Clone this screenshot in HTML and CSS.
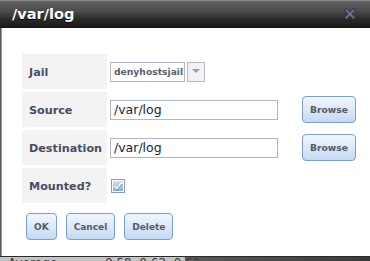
FILE: index.html
```html
<!DOCTYPE html>
<html>
<head>
<meta charset="utf-8">
<link rel="stylesheet" href="styles.css">
</head>
<body>
<div class="dialog">
  <div class="titlebar">
    <span class="title">/var/log</span>
    <svg class="close" width="12" height="12" viewBox="0 0 12 12">
      <path d="M2.5 2.5 L9.5 9.5 M9.5 2.5 L2.5 9.5" stroke="#2a303a" stroke-width="3.6" stroke-linecap="square"/>
      <path d="M2.5 2.5 L9.5 9.5 M9.5 2.5 L2.5 9.5" stroke="#66768e" stroke-width="2" stroke-linecap="square"/>
    </svg>
  </div>
  <div class="body">
    <div class="form">
      <div class="label">Jail</div>
      <div class="field">
        <div class="select">
          <span class="select-text">denyhostsjail</span>
          <span class="select-arrow"><svg width="8" height="5" viewBox="0 0 8 5"><path d="M0 0 H8 L4 4 Z" fill="#8da0bb"/></svg></span>
        </div>
      </div>
      <div class="cell"></div>

      <div class="label">Source</div>
      <div class="field"><div class="input">/var/log</div></div>
      <div class="cell"><button class="btn">Browse</button></div>

      <div class="label">Destination</div>
      <div class="field"><div class="input">/var/log</div></div>
      <div class="cell"><button class="btn">Browse</button></div>

      <div class="label">Mounted?</div>
      <div class="field">
        <svg class="check" width="14" height="14" viewBox="0 0 14 14">
          <defs>
            <linearGradient id="cg" x1="0" y1="0" x2="0" y2="1">
              <stop offset="0" stop-color="#d4e3f5"/>
              <stop offset="1" stop-color="#89abd6"/>
            </linearGradient>
          </defs>
          <rect x="0.5" y="0.5" width="13" height="13" fill="#fff" stroke="#8e9cb2"/>
          <rect x="2" y="2" width="10" height="10" fill="url(#cg)"/>
          <path d="M3.5 7.5 L6 10 L11 3.5" fill="none" stroke="#ffffff" stroke-width="1.8"/>
          <path d="M3.5 8.8 L6 11 L11 5" fill="none" stroke="#4f79b4" stroke-width="0.8"/>
        </svg>
      </div>
      <div class="cell"></div>
    </div>
    <div class="actions">
      <button class="btn">OK</button>
      <button class="btn">Cancel</button>
      <button class="btn">Delete</button>
    </div>
  </div>
  <div class="page">
    <span class="pg1">Average</span>
    <span class="pg2">0.58, 0.62, 0.60</span>
  </div>
</div>
</body>
</html>
```
FILE: styles.css
```css
html, body {
  margin: 0;
  padding: 0;
  background: #3a3a3a;
}
.dialog {
  width: 370px;
  height: 261px;
  overflow: hidden;
  display: flex;
  flex-direction: column;
  font-family: "DejaVu Sans", Verdana, sans-serif;
}
.titlebar {
  height: 28px;
  flex: none;
  box-sizing: border-box;
  border-top: 1px solid #8a8a8a;
  border-bottom: 1px solid #141414;
  background: linear-gradient(#626262 0%, #4a4a4a 40%, #2a2a2a 70%, #1c1c1c 100%);
  display: flex;
  align-items: center;
  justify-content: space-between;
  padding: 0 14px 0 12px;
}
.title {
  color: #ffffff;
  font-weight: bold;
  font-size: 14.5px;
  text-shadow: 0 1px 0 #000;
}
.close {
  display: block;
}
.body {
  height: 228px;
  flex: none;
  background: #ffffff;
  border-left: 1px solid #5a5a5a;
  box-shadow: inset 1px 0 0 #9a9a9a;
  padding: 26px 0 0 21px;
  box-sizing: border-box;
}
.form {
  display: grid;
  grid-template-columns: 85px 189px 54px;
  grid-auto-rows: 35px;
  gap: 3px;
}
.label {
  background: #f3f3f3;
  display: flex;
  align-items: center;
  padding-left: 7px;
  padding-top: 1px;
  font-weight: bold;
  font-size: 11.2px;
  color: #474d62;
}
.field {
  display: flex;
  align-items: center;
}
.cell {
  display: flex;
  align-items: center;
}
.select {
  display: flex;
  gap: 2px;
  height: 20px;
}
.select-text {
  width: 75px;
  box-sizing: border-box;
  border: 1px solid #b3b7c6;
  display: flex;
  align-items: center;
  padding-left: 3px;
  font-weight: bold;
  font-size: 9.2px;
  color: #5b5d6c;
}
.select-arrow {
  width: 18px;
  box-sizing: border-box;
  border: 1px solid #b9bcc4;
  background: #f2f2f2;
  display: flex;
  align-items: center;
  justify-content: center;
}
.input {
  width: 168px;
  height: 20px;
  box-sizing: border-box;
  border: 1px solid #b0b6c8;
  display: flex;
  align-items: center;
  padding-left: 3px;
  font-size: 12.5px;
  color: #1c1c2c;
}
.check {
  display: block;
  margin-left: 1px;
}
.btn {
  height: 27px;
  box-sizing: border-box;
  border: 1px solid #7aa0cb;
  border-radius: 4px;
  background: linear-gradient(#f1f7fe 0%, #dce9f9 50%, #c3d9f3 100%);
  font-family: "DejaVu Sans", Verdana, sans-serif;
  font-weight: bold;
  font-size: 9px;
  color: #555a66;
  padding: 0 7px;
  margin: 0;
}
.cell .btn {
  width: 54px;
  padding: 0;
  font-size: 9.2px;
}
.actions {
  display: flex;
  gap: 9px;
  margin: 10px 0 0 4px;
}
.page {
  flex: none;
  height: 5px;
  border-top: 1px solid #2a2a2a;
  background: linear-gradient(to right, #c4c4c4 0, #c4c4c4 185px, #5a5a5a 185px, #3a3a3a 100%);
  display: flex;
  align-items: flex-start;
  overflow: hidden;
  font-size: 12px;
  line-height: 12px;
  color: #3a3a3a;
}
.pg1 {
  margin-left: 8px;
  width: 97px;
}
```
